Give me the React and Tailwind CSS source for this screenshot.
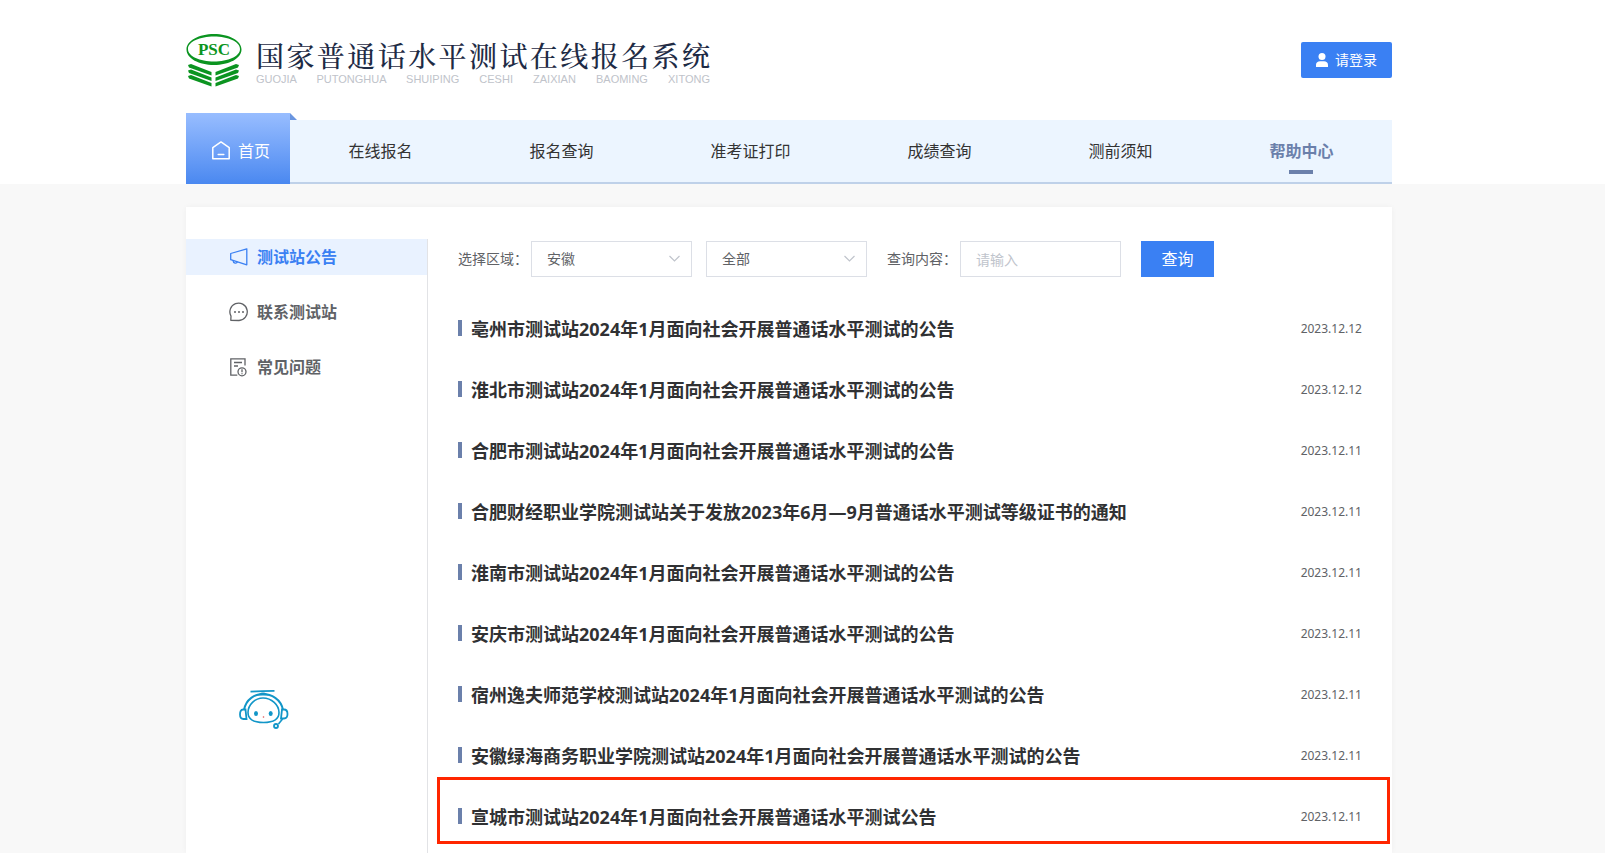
import React, { useState } from 'react'

const navItems = ['在线报名', '报名查询', '准考证打印', '成绩查询', '测前须知', '帮助中心']

const notices = [
  { title: '亳州市测试站2024年1月面向社会开展普通话水平测试的公告', date: '2023.12.12' },
  { title: '淮北市测试站2024年1月面向社会开展普通话水平测试的公告', date: '2023.12.12' },
  { title: '合肥市测试站2024年1月面向社会开展普通话水平测试的公告', date: '2023.12.11' },
  { title: '合肥财经职业学院测试站关于发放2023年6月—9月普通话水平测试等级证书的通知', date: '2023.12.11' },
  { title: '淮南市测试站2024年1月面向社会开展普通话水平测试的公告', date: '2023.12.11' },
  { title: '安庆市测试站2024年1月面向社会开展普通话水平测试的公告', date: '2023.12.11' },
  { title: '宿州逸夫师范学校测试站2024年1月面向社会开展普通话水平测试的公告', date: '2023.12.11' },
  { title: '安徽绿海商务职业学院测试站2024年1月面向社会开展普通话水平测试的公告', date: '2023.12.11' },
  { title: '宣城市测试站2024年1月面向社会开展普通话水平测试公告', date: '2023.12.11', marked: true },
]

function Logo() {
  return (
    <svg width="56" height="54" viewBox="0 0 56 54" aria-hidden="true">
      <path
        fill="#0b9420"
        fillRule="evenodd"
        d="M28 0C43 0 55.500 6.500 55.500 15.500S43 31 28 31 .500 24.500.500 15.500 13 0 28 0zM28 2.500C14 2.500 2 7.500 2 15S14 27.500 28 27.500 54 22.500 54 15 42 2.500 28 2.500z"
      />
      <text x="28" y="21" textAnchor="middle" fontSize="17" fontWeight="700" fill="#0b9420" fontFamily="'Liberation Serif', serif">PSC</text>
      <g fill="#0b9420">
        <path d="M2 31l3-1 20.500 8v3.500L3 33.500zM53 31l-3-1-20.500 8v3.500L52 33.500z" />
        <path d="M2 36.500l3-1 20.500 8V47L3 39zM53 36.500l-3-1-20.500 8V47L52 39z" />
        <path d="M2 42l3-1 20.500 8v3.500L3 44.500zM53 42l-3-1-20.500 8v3.500L52 44.500z" />
      </g>
    </svg>
  )
}

function HomeIcon() {
  return (
    <svg width="18" height="19" viewBox="0 0 18 19" fill="none" stroke="currentColor" strokeWidth="1.500" strokeLinejoin="round" strokeLinecap="round" aria-hidden="true">
      <path d="M.800 6.600L9 .900l8.200 5.700v11.100H.800z" />
      <path d="M6.200 13.500h5.600" />
    </svg>
  )
}

function UserIcon() {
  return (
    <svg width="12" height="14" viewBox="0 0 12 14" fill="currentColor" aria-hidden="true">
      <circle cx="6" cy="3.500" r="3.500" />
      <path d="M0 14v-2.200C0 9.500 1.800 8.200 4 8.200h4c2.200 0 4 1.300 4 3.600V14z" />
    </svg>
  )
}

function HornIcon() {
  return (
    <svg width="20" height="20" viewBox="0 0 20 20" fill="none" stroke="currentColor" strokeWidth="1.300" strokeLinejoin="round" aria-hidden="true">
      <path d="M1.700 6.500L17.800 1.800v16L1.700 12.700z" />
      <path d="M4 13.500c.200 3.200 3.800 3.200 4.400 1.300" />
    </svg>
  )
}

function ChatIcon() {
  return (
    <svg width="20" height="20" viewBox="0 0 20 20" aria-hidden="true">
      <path fill="none" stroke="currentColor" strokeWidth="1.300" strokeLinejoin="round" d="M1.800 18.300l.200-4.200A8.700 8.700 0 1 1 10 18.500z" />
      <g fill="currentColor">
        <circle cx="6" cy="10" r="1" />
        <circle cx="10" cy="10" r="1" />
        <circle cx="14" cy="10" r="1" />
      </g>
    </svg>
  )
}

function FaqIcon() {
  return (
    <svg width="20" height="20" viewBox="0 0 20 20" fill="none" stroke="currentColor" strokeWidth="1.300" aria-hidden="true">
      <path d="M16 8.500V1.800H1.800v16.400h6.500" />
      <path d="M5 5.500h8M5 9h4" />
      <circle cx="13" cy="14.800" r="4" />
      <path d="M13 12.300v3M13 16.200v1" />
    </svg>
  )
}

function Robot() {
  return (
    <svg width="50" height="41" viewBox="0 0 50 41" fill="none" stroke="#1296c8" aria-hidden="true">
      <path strokeWidth="1.800" d="M11.500 2.700l12-.500 12-.300" />
      <path strokeWidth="2" d="M5 21C7 10 16 5 24 5s18 5 20 16" />
      <path fill="#1296c8" stroke="none" d="M18 6.500c2-1 3-3 6-3s4 2 6 3z" />
      <path strokeWidth="1.600" d="M24 9C16 9 9 16 9 23.500c0 6.500 5 10 15.500 10S40 30 40 23.500C40 16 32.500 9 24 9z" />
      <path strokeWidth="1.800" d="M6.500 20.500H4.200C1.500 20.500 1 23 1 25.500s1 4.500 3.500 4.500h3zM43 20.500h2c3 0 3.500 2 3.500 4.500s-1.200 4.500-3.500 4.500h-3z" />
      <path strokeWidth="1.600" d="M43.500 30l-4 5" />
      <circle cx="37" cy="37" r="2" strokeWidth="1.800" />
      <ellipse cx="17" cy="24.500" rx="2" ry="2.500" fill="#1296c8" stroke="none" />
      <ellipse cx="31.700" cy="24.500" rx="2" ry="2.500" fill="#1296c8" stroke="none" />
      <circle cx="24.500" cy="28" r=".800" fill="#e05050" stroke="none" />
    </svg>
  )
}

const sideItems = [
  { label: '测试站公告', Icon: HornIcon },
  { label: '联系测试站', Icon: ChatIcon },
  { label: '常见问题', Icon: FaqIcon },
]

function Select({ id, label, value, onChange, options }) {
  return (
    <div className="relative">
      <select
        id={id}
        aria-label={label}
        value={value}
        onChange={e => onChange(e.target.value)}
        className="block w-[161px] h-9 pl-[15px] pr-8 appearance-none bg-white border border-[#dcdfe6] text-sm text-[#606266] focus:outline-none focus:border-[#3a80f3]"
      >
        {options.map(o => <option key={o}>{o}</option>)}
      </select>
      <svg className="absolute right-3 top-[14px] pointer-events-none" width="11" height="8" viewBox="0 0 11 8" fill="none" stroke="#c0c4cc" strokeWidth="1.200" aria-hidden="true">
        <path d="M.500 1l5 5 5-5" />
      </svg>
    </div>
  )
}

export default function App() {
  const [area, setArea] = useState('安徽')
  const [site, setSite] = useState('全部')
  const [keyword, setKeyword] = useState('')

  return (
    <div className="min-h-screen flex flex-col bg-[#f8f8f8] font-['Noto_Sans','Noto_Sans_CJK_SC',sans-serif]">
      <header className="bg-white pr-[27px]">
        <div className="max-w-[1206px] mx-auto">
          <div className="h-[113px] flex items-start justify-between">
            <div className="flex items-start gap-[14px] pt-[34px]">
              <Logo />
              <div className="w-[454px] pt-1">
                <h1 className="text-[28px] leading-[34px] font-medium text-[#1e2b45] whitespace-nowrap [text-align-last:justify] font-['Noto_Serif_CJK_SC','Noto_Sans_CJK_SC',serif]">国家普通话水平测试在线报名系统</h1>
                <p className="pt-px text-[11px] leading-3 text-[#c0c3ca] [text-align-last:justify] font-['Liberation_Sans',sans-serif]">GUOJIA PUTONGHUA SHUIPING CESHI ZAIXIAN BAOMING XITONG</p>
              </div>
            </div>
            <button className="mt-[42px] h-9 px-[15px] flex items-center gap-[7px] rounded-xs bg-[#3a80f3] text-white text-sm">
              <UserIcon />
              请登录
            </button>
          </div>

          <nav className="flex items-end">
            <a href="#home" className="relative w-[104px] h-[71px] pt-1 pl-1.5 flex items-center justify-center gap-2 bg-linear-to-b from-[#98bdff] to-[#4a88f0] text-white text-base">
              <HomeIcon />
              首页
              <svg className="absolute left-full top-0" width="7" height="7" viewBox="0 0 7 7" aria-hidden="true">
                <path d="M0 0l7 7H0z" fill="#6a95e0" />
              </svg>
            </a>
            <div className="flex-1 h-16 flex justify-around bg-[#ecf5ff] border-b-2 border-[#bfd1e9]">
              {navItems.map(item => (
                item === '帮助中心' ? (
                  <a key={item} href="#help" className="relative flex items-center text-base font-bold text-[#6b80ab]">
                    {item}
                    <span className="absolute bottom-2 left-1/2 -translate-x-1/2 w-6 h-1 bg-[#6b80ab]" />
                  </a>
                ) : (
                  <a key={item} href="#nav" className="flex items-center text-base text-[#333]">{item}</a>
                )
              ))}
            </div>
          </nav>
        </div>
      </header>

      <main className="flex-1 flex pt-[23px] pr-[27px]">
        <div className="w-full max-w-[1206px] mx-auto pt-8 flex bg-white shadow-[0_0_6px_rgba(0,0,0,0.04)]">
          <aside className="w-[242px] shrink-0 border-r border-[#e2e3e6]">
            <ul className="flex flex-col gap-[19px]">
              {sideItems.map(({ label, Icon }, i) => (
                <li key={label}>
                  <a
                    href="#side"
                    className={`h-9 pl-[43px] flex items-center gap-2 text-base font-bold ${
                      i === 0 ? 'bg-[#e9f2ff] text-[#3a80f3]' : 'text-[#606266]'
                    }`}
                  >
                    <Icon />
                    {label}
                  </a>
                </li>
              ))}
            </ul>
          </aside>

          <section className="flex-1 pl-[30px] pr-[30px]">
            <form onSubmit={e => e.preventDefault()} className="pt-0.5 flex items-center text-sm text-[#606266]">
              <label htmlFor="area" className="mr-[3px]">选择区域：</label>
              <Select id="area" value={area} onChange={setArea} options={['安徽', '北京', '上海']} />
              <div className="ml-[14px]">
                <Select id="site" label="测试站" value={site} onChange={setSite} options={['全部']} />
              </div>
              <label htmlFor="keyword" className="ml-5 mr-[3px]">查询内容：</label>
              <input
                id="keyword"
                type="text"
                placeholder="请输入"
                value={keyword}
                onChange={e => setKeyword(e.target.value)}
                className="w-[161px] h-9 px-[15px] bg-white border border-[#dcdfe6] placeholder:text-[#c0c4cc] focus:outline-none focus:border-[#3a80f3]"
              />
              <button type="submit" className="ml-5 w-[73px] h-9 bg-[#3a80f3] text-white text-base">查询</button>
            </form>

            <ul className="mt-5">
              {notices.map(n => (
                <li key={n.title} className="relative h-[61px] flex items-center">
                  <span className="w-1 h-4 mr-[9px] bg-[#6b80ab]" />
                  <a href="#notice" className="flex-1 pt-0.5 text-lg font-bold text-[#303133]">{n.title}</a>
                  <time className="pt-0.5 text-xs text-[#606266]">{n.date}</time>
                  {n.marked && <span className="absolute -left-[21px] -right-7 -top-2 h-[67px] border-3 border-[#ff2600]" />}
                </li>
              ))}
            </ul>
          </section>
        </div>
      </main>

      <button className="fixed left-[239px] top-[689px]" aria-label="智能客服">
        <Robot />
      </button>
    </div>
  )
}
